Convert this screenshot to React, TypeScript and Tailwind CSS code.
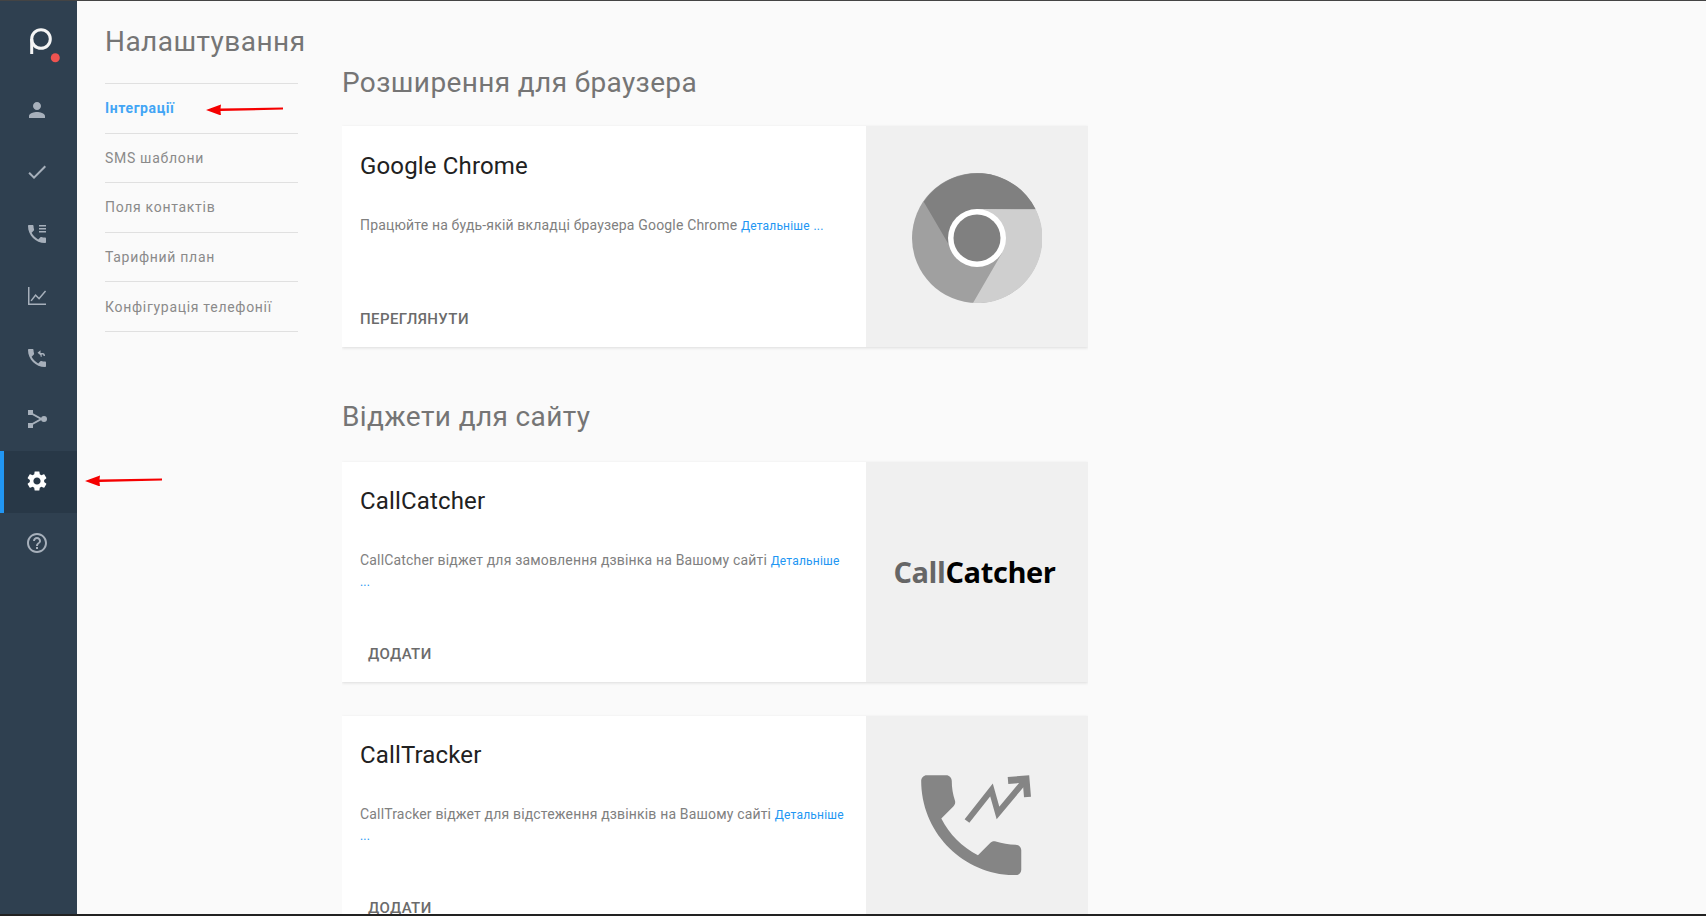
import React from 'react';

const phone = "M6.62 10.79c1.44 2.83 3.76 5.14 6.59 6.59l2.2-2.2c.27-.27.67-.36 1.02-.24 1.12.37 2.33.57 3.57.57.55 0 1 .45 1 1V20c0 .55-.45 1-1 1-9.39 0-17-7.61-17-17 0-.55.45-1 1-1h3.5c.55 0 1 .45 1 1 0 1.25.2 2.45.57 3.57.11.35.03.74-.25 1.02l-2.2 2.2z";

const Icon = ({ children }: { children: React.ReactNode }) => (
  <svg viewBox="0 0 24 24" className="w-6 h-6" fill="currentColor">{children}</svg>
);

const sideItems = [
  <Icon><path d="M12 12c2.21 0 4-1.79 4-4s-1.79-4-4-4-4 1.79-4 4 1.79 4 4 4zm0 2c-2.67 0-8 1.34-8 4v2h16v-2c0-2.66-5.33-4-8-4z" /></Icon>,
  <Icon><path d="M9 16.17L4.83 12l-1.42 1.41L9 19 21 7l-1.41-1.41z" /></Icon>,
  <Icon><path d={phone} /><path d="M14 3h7v1.600h-7zM14 6h7v1.600h-7zM14 9h7v1.600h-7z" /></Icon>,
  <Icon><path d="M3 3h1.500v16.500H21V21H3z" /><path d="M5.500 16.500l5-6.500 3.500 3.500 6-7 1.100 1-7 8.200-3.500-3.500-3.900 5z" /></Icon>,
  <Icon><path d={phone} /><path d="M15.500 10.500V7h2.200c1.500 0 2.300 1 2.300 3h-1.500c0-1-.3-1.600-1-1.600h-.8V11z M15.500 4.200v5l-3-2.500z" /></Icon>,
  <Icon><path d="M3 3h5v5H3zM3 16h5v5H3z" /><circle cx="19" cy="12" r="3" /><path d="M6.500 5.500L17 11.300v1.400L6.500 18.500l-1-1.600 9-4.900-9-4.900z" /></Icon>,
  <Icon><path d="M19.14 12.94c.04-.3.06-.61.06-.94 0-.32-.02-.64-.07-.94l2.03-1.58c.18-.14.23-.41.12-.61l-1.92-3.32c-.12-.22-.37-.29-.59-.22l-2.39.96c-.5-.38-1.03-.7-1.62-.94l-.36-2.54c-.04-.24-.24-.41-.48-.41h-3.84c-.24 0-.43.17-.47.41l-.36 2.54c-.59.24-1.13.57-1.62.94l-2.39-.96c-.22-.08-.47 0-.59.22L2.74 8.87c-.12.21-.08.47.12.61l2.03 1.58c-.05.3-.09.63-.09.94s.02.64.07.94l-2.03 1.58c-.18.14-.23.41-.12.61l1.92 3.32c.12.22.37.29.59.22l2.39-.96c.5.38 1.03.7 1.62.94l.36 2.54c.05.24.24.41.48.41h3.84c.24 0 .44-.17.47-.41l.36-2.54c.59-.24 1.13-.56 1.62-.94l2.39.96c.22.08.47 0 .59-.22l1.92-3.32c.12-.22.07-.47-.12-.61l-2.01-1.58zM12 15.600c-1.980 0-3.600-1.620-3.600-3.600s1.620-3.600 3.600-3.600 3.600 1.620 3.600 3.600-1.620 3.600-3.600 3.600z" /></Icon>,
  <Icon><path d="M11 18h2v-2h-2v2zm1-16C6.480 2 2 6.480 2 12s4.480 10 10 10 10-4.480 10-10S17.520 2 12 2zm0 18c-4.410 0-8-3.590-8-8s3.590-8 8-8 8 3.590 8 8-3.590 8-8 8zm0-14c-2.210 0-4 1.790-4 4h2c0-1.100.9-2 2-2s2 .9 2 2c0 2-3 1.750-3 5h2c0-2.250 3-2.500 3-5 0-2.210-1.790-4-4-4z" /></Icon>,
];

const navItems = ['Інтеграції', 'SMS шаблони', 'Поля контактів', 'Тарифний план', 'Конфігурація телефонії'];

const RedArrow = ({ className }: { className: string }) => (
  <svg viewBox="0 0 78 12" className={className}>
    <path d="M0 7L15 1.500 14.500 5.500 77 4.500 77 6.500 14.500 8 15 12.500z" fill="#f50000" />
  </svg>
);

const ChromeLogo = () => (
  <svg viewBox="0 0 130 130" className="w-[130px] h-[130px] mt-[2px]">
    <circle cx="65" cy="65" r="65" fill="#a0a0a0" />
    <path d="M11.700 28.700A65 65 0 0 1 123.700 36.300L65 36 37 72z" fill="#808080" />
    <path d="M123.700 36.300A65 65 0 0 1 61 129.900L90 80 65 36z" fill="#cfcfcf" />
    <circle cx="65" cy="65" r="29" fill="#fff" />
    <circle cx="65" cy="65" r="23.500" fill="#808080" />
  </svg>
);

const TrackerLogo = () => (
  <svg viewBox="0 0 112 100" className="w-[112px] h-[100px] -mt-[2px]" fill="#858585">
    <path transform="translate(-16.500 -16.500) scale(5.560)" d={phone} />
    <path d="M46 46L70.500 15 77 38 102 8" fill="none" stroke="#858585" strokeWidth="6" />
    <path d="M87 5.500L105 4 106.500 22" fill="none" stroke="#858585" strokeWidth="7" />
  </svg>
);

const CatcherLogo = () => (
  <span className="font-['Open_Sans',sans-serif] font-bold text-[29px] tracking-[-0.4px] text-black -mt-[1px] pr-[5px]">
    <span className="text-[#666666]">Call</span>Catcher
  </span>
);

const cards = [
  { title: 'Google Chrome', text: 'Працюйте на будь-якій вкладці браузера Google Chrome', action: 'ПЕРЕГЛЯНУТИ', first: true, logo: <ChromeLogo /> },
  { title: 'CallCatcher', text: 'CallCatcher віджет для замовлення дзвінка на Вашому сайті', action: 'ДОДАТИ', first: false, logo: <CatcherLogo /> },
  { title: 'CallTracker', text: 'CallTracker віджет для відстеження дзвінків на Вашому сайті', action: 'ДОДАТИ', first: false, logo: <TrackerLogo /> },
];

const Card = ({ card }: { card: (typeof cards)[number] }) => (
  <div className={`flex w-[746px] shrink-0 bg-white shadow-[0_1px_3px_rgba(0,0,0,0.12)] ${card.first ? 'h-[221px]' : 'h-[220px]'}`}>
    <div className={`flex w-[524px] flex-col pl-[18px] pr-[18px] pb-[10px] ${card.first ? 'pt-[25px]' : 'pt-6'}`}>
      <h3 className="text-[24px] leading-[30px] tracking-[0.15px] text-[#212121]">{card.title}</h3>
      <p className="mt-[34px] text-[14px] leading-5 tracking-[0.17px] text-[#808080]">
        {card.text} <a className="text-[12px] tracking-[0.2px] text-[#2196f3]">Детальніше</a> <a className="text-[12px] tracking-[0.2px] text-[#2196f3]">...</a>
      </p>
      <div className={`mt-auto h-9 text-[15px] leading-9 font-medium tracking-[0.4px] text-[#6b6b6b] ${card.first ? '' : 'pl-2'}`}>{card.action}</div>
    </div>
    <div className="flex w-[222px] items-center justify-center bg-[#f0f0f0]">{card.logo}</div>
  </div>
);

export default function App() {
  return (
    <div className="flex h-[916px] w-[1706px] flex-col overflow-hidden bg-[#fafafa] font-['Roboto',sans-serif]">
      <div className="h-px bg-[#444444]" />
      <div className="flex min-h-0 flex-1">
        {/* Sidebar */}
        <aside className="flex w-[77px] shrink-0 flex-col bg-[#2f4050] text-[#a7b0bb]">
          <div className="flex h-[78px] items-start pt-[27px] pl-[29px]">
            <svg viewBox="0 0 32 35" className="w-8 h-[35px]">
              <circle cx="12" cy="11" r="9.300" fill="none" stroke="#f5f5f5" strokeWidth="3" />
              <path d="M2.700 11V26" fill="none" stroke="#f5f5f5" strokeWidth="3" />
              <circle cx="26.300" cy="29.700" r="4.500" fill="#ef5350" />
            </svg>
          </div>
          {sideItems.map((icon, i) => (
            <div key={i} className={`relative flex h-[62px] items-center justify-center ${i >= 5 ? 'pb-[2px]' : ''} ${i === 6 ? 'border-l-4 border-[#2196f3] bg-[#283847] text-white pr-2' : 'pr-1'}`}>
              {icon}
              {i === 6 && <RedArrow className="absolute left-[81px] top-[23px] w-[78px] h-3" />}
            </div>
          ))}
        </aside>

        {/* Settings menu */}
        <nav className="w-[193px] ml-7 shrink-0">
          <h1 className="h-[82px] pt-[21px] text-[28px] leading-[40px] tracking-[0.45px] whitespace-nowrap text-[#757575]">Налаштування</h1>
          <ul className="border-t border-[#e0e0e0]">
            {navItems.map((item, i) => (
              <li key={item} className={`relative flex h-[49.6px] items-center border-b border-[#e0e0e0] pt-px text-[14px] ${i === 0 ? 'font-bold tracking-[0.6px] text-[#42a5f5]' : 'tracking-[0.7px] text-[#8a8a8a]'}`}>
                {item}
                {i === 0 && <RedArrow className="absolute left-[101px] top-[19px] w-[78px] h-3" />}
              </li>
            ))}
          </ul>
        </nav>

        {/* Content */}
        <main className="ml-11 flex flex-col overflow-hidden">
          <h2 className="mt-[62px] text-[28px] leading-10 tracking-[0.38px] text-[#757575]">Розширення для браузера</h2>
          <div className="mt-[23px]"><Card card={cards[0]} /></div>
          <h2 className="mt-[50px] text-[28px] leading-10 tracking-[0.38px] text-[#757575]">Віджети для сайту</h2>
          <div className="mt-[25px]"><Card card={cards[1]} /></div>
          <div className="mt-[34px]"><Card card={cards[2]} /></div>
        </main>
      </div>
      <div className="h-[2px] bg-[#222222]" />
    </div>
  );
}
